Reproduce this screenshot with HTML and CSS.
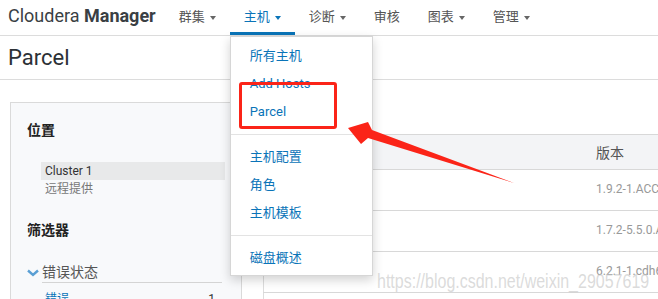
FILE: index.html
```html
<!DOCTYPE html>
<html lang="zh">
<head>
    <meta charset="UTF-8">
    <title>Parcel - Cloudera Manager</title>
    <link rel="stylesheet" href="styles.css">
</head>
<body>
    <div id="topbar">
        <div class="brand">Cloudera <b>Manager</b></div>
        <ul class="nav">
            <li class="nav-item">群集<span class="caret"></span></li>
            <li class="nav-item active">主机<span class="caret"></span>
                <div class="dropdown">
                    <a>所有主机</a>
                    <a>Add Hosts</a>
                    <a>Parcel</a>
                    <div class="divider"></div>
                    <a>主机配置</a>
                    <a>角色</a>
                    <a>主机模板</a>
                    <div class="divider"></div>
                    <a>磁盘概述</a>
                </div>
            </li>
            <li class="nav-item">诊断<span class="caret"></span></li>
            <li class="nav-item">审核</li>
            <li class="nav-item">图表<span class="caret"></span></li>
            <li class="nav-item">管理<span class="caret"></span></li>
        </ul>
    </div>

    <div id="titlebar">Parcel</div>

    <div id="content">
        <div class="sidebar">
            <div class="side-title">位置</div>
            <ul class="locations">
                <li class="selected">Cluster 1</li>
                <li>远程提供</li>
            </ul>
            <div class="side-title filters">筛选器</div>
            <div class="filter-head">
                <svg class="chevron" width="12" height="8" viewBox="0 0 12 8"><path d="M1 1.5 L6 6 L11 1.5" fill="none" stroke="#5a9fd4" stroke-width="2.4"/></svg>
                <span>错误状态</span>
            </div>
            <div class="filter-row"><a>错误</a><span>1</span></div>
        </div>

        <div class="table-wrap">
            <table class="parcels">
                <tr>
                    <th class="name-col"></th>
                    <th>版本</th>
                </tr>
                <tr><td></td><td>1.9.2-1.ACCUMULO6.1.0</td></tr>
                <tr><td></td><td>1.7.2-5.5.0.ACCUMULO5.5.0</td></tr>
                <tr><td></td><td>6.2.1-1.cdh6.2.1.p0.1425774</td></tr>
                <tr><td></td><td class="strong">1.5.4-1.cdh6.2.1</td></tr>
            </table>
        </div>
    </div>

    <!-- annotations drawn on top of the screenshot -->
    <div class="mark-box"></div>
    <svg class="mark-arrow" width="658" height="299" viewBox="0 0 658 299">
        <polygon points="348,128 368,122 372,130 514,183 368,138 361,144" fill="#fb2418"/>
    </svg>
    <div class="watermark">https://blog.csdn.net/weixin_29057619</div>
</body>
</html>
```

FILE: styles.css
```css
body {
    margin: 0;
    width: 658px;
    height: 299px;
    overflow: hidden;
    position: relative;
    background: #fff;
    font-family: Roboto, "Noto Sans CJK SC", sans-serif;
    color: #333;
}

#topbar {
    display: flex;
    align-items: stretch;
    height: 35px;
    border-bottom: 1px solid #dcdcdc;
    padding-left: 8px;
}

.brand {
    font-size: 18px;
    color: #3a3f44;
    line-height: 31px;
    margin-right: 9px;
    white-space: nowrap;
}

.brand b {
    font-weight: 700;
}

.nav {
    display: flex;
    list-style: none;
    margin: 0;
    padding: 0;
}

.nav-item {
    position: relative;
    padding: 0 14px;
    font-size: 13px;
    line-height: 33px;
    color: #555;
    white-space: nowrap;
}

.nav-item.active {
    color: #0a74b8;
    border-bottom: 3px solid #0a74b8;
    height: 32px;
}

.caret {
    display: inline-block;
    width: 0;
    height: 0;
    margin-left: 5px;
    vertical-align: middle;
    border-left: 3.5px solid transparent;
    border-right: 3.5px solid transparent;
    border-top: 4px solid #666;
}

.active .caret {
    border-top-color: #0a74b8;
}

.dropdown {
    position: absolute;
    top: 36px;
    left: 0;
    width: 141px;
    padding: 5px 0 3px;
    background: #fff;
    border: 1px solid #d6d6d6;
    box-shadow: 0 4px 10px rgba(0, 0, 0, 0.18);
    z-index: 5;
}

.dropdown a {
    display: block;
    padding-left: 19px;
    line-height: 28px;
    font-size: 13px;
    color: #0a74b8;
}

.dropdown .divider {
    height: 1px;
    margin: 8px 0 8px;
    background: #e3e3e3;
}

#titlebar {
    height: 43px;
    line-height: 43px;
    padding-left: 8px;
    font-size: 22px;
    color: #2c3136;
    border-bottom: 1px solid #dcdcdc;
}

#content {
    display: flex;
    gap: 21px;
    padding: 22px 0 0 10px;
}

.sidebar {
    flex: none;
    width: 198px;
    height: 260px;
    padding: 17px 16px 0 16px;
    background: #f8f9fb;
    border: 1px solid #dadada;
}

.side-title {
    font-size: 14px;
    font-weight: 700;
    line-height: 20px;
    color: #222;
}

.side-title.filters {
    margin-top: 22px;
}

.locations {
    list-style: none;
    margin: 22px 0 0 14px;
    padding: 0;
}

.locations li {
    font-size: 12px;
    line-height: 18px;
    padding-left: 4px;
    color: #777;
}

.locations li.selected {
    background: #e8e9ea;
    color: #333;
}

.filter-head {
    display: flex;
    align-items: center;
    margin-top: 22px;
}

.chevron {
    flex: none;
    margin: 0 3px 0 0;
}

.filter-head span {
    flex: 1;
    margin-right: 3px;
    font-size: 14px;
    line-height: 20px;
    color: #555;
    border-bottom: 1px solid #d4d4d4;
}

.filter-row {
    display: flex;
    justify-content: space-between;
    margin: 7px 10px 0 18px;
    font-size: 12px;
    line-height: 18px;
}

.filter-row a {
    color: #0a74b8;
}

.table-wrap {
    padding-top: 32px;
}

.parcels {
    width: 520px;
    border-collapse: collapse;
    border-left: 1px solid #ddd;
}

.parcels th {
    height: 34px;
    padding: 0 12px;
    text-align: left;
    font-size: 14px;
    font-weight: 400;
    color: #555;
    background: #f3f4f6;
    border-top: 1px solid #d8d8d8;
    border-bottom: 1px solid #d8d8d8;
}

.parcels th.name-col {
    width: 296px;
}

.parcels td {
    height: 38px;
    padding: 0 12px 2px;
    font-size: 12px;
    color: #999;
    border-bottom: 1px solid #d8d8d8;
    white-space: nowrap;
}

.parcels td.strong {
    color: #333;
    font-weight: 700;
    vertical-align: top;
    padding-top: 9px;
}

.mark-box {
    position: absolute;
    left: 239px;
    top: 82px;
    width: 92px;
    height: 41px;
    border: 3px solid #fb2418;
    border-radius: 3px;
    z-index: 10;
}

.mark-arrow {
    position: absolute;
    left: 0;
    top: 0;
    z-index: 10;
    pointer-events: none;
}

.watermark {
    position: absolute;
    left: 377px;
    top: 270px;
    font-family: "Liberation Sans", sans-serif;
    font-size: 20px;
    color: rgba(195, 195, 195, 0.6);
    transform: scaleX(0.8);
    transform-origin: left top;
    z-index: 11;
    white-space: nowrap;
}
```
